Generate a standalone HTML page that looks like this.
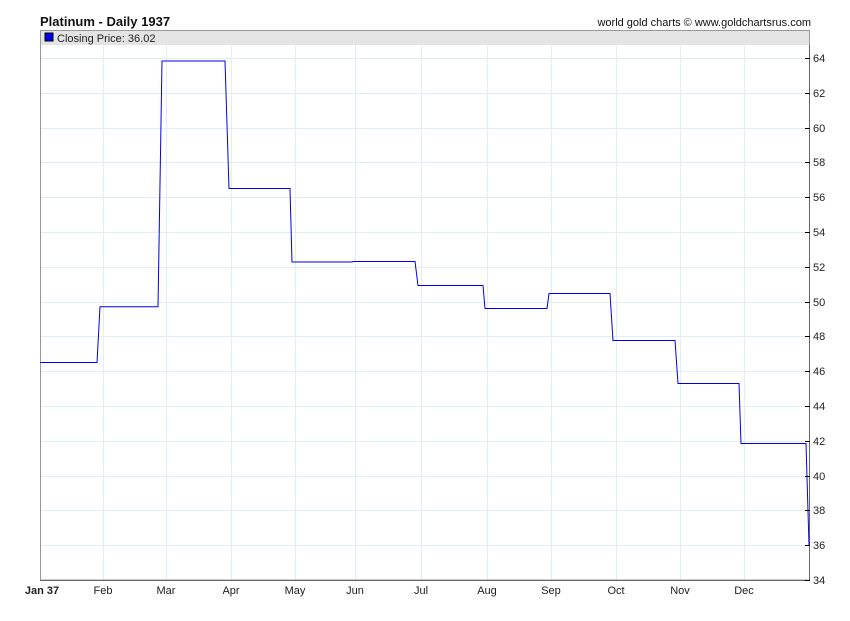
<!DOCTYPE html>
<html><head><style>
body{margin:0;background:#fff;width:850px;height:616px;overflow:hidden}
svg text{font-family:"Liberation Sans",Arial,sans-serif}
</style></head><body>
<svg width="850" height="616" xmlns="http://www.w3.org/2000/svg">
<rect width="850" height="616" fill="#fff"/>
<text x="40" y="26" font-size="13" font-weight="bold" fill="#111">Platinum - Daily 1937</text>
<text x="811" y="26" font-size="11" text-anchor="end" fill="#111">world gold charts © www.goldchartsrus.com</text>
<rect x="40" y="30" width="770" height="15" fill="#e4e4e4"/>
<rect x="45" y="33" width="8" height="8" fill="#0000ee" stroke="#000" stroke-width="1"/>
<text x="57" y="42" font-size="11" fill="#222">Closing Price: 36.02</text>
<g stroke="#e0eef8" stroke-width="1">
<line x1="103.5" y1="45" x2="103.5" y2="580"/><line x1="166.5" y1="45" x2="166.5" y2="580"/>
<line x1="231.5" y1="45" x2="231.5" y2="580"/><line x1="295.5" y1="45" x2="295.5" y2="580"/>
<line x1="355.5" y1="45" x2="355.5" y2="580"/><line x1="421.5" y1="45" x2="421.5" y2="580"/>
<line x1="487.5" y1="45" x2="487.5" y2="580"/><line x1="551.5" y1="45" x2="551.5" y2="580"/>
<line x1="616.5" y1="45" x2="616.5" y2="580"/><line x1="680.5" y1="45" x2="680.5" y2="580"/>
<line x1="744.5" y1="45" x2="744.5" y2="580"/>
<line x1="40" y1="58.5" x2="810" y2="58.5"/><line x1="40" y1="93.5" x2="810" y2="93.5"/>
<line x1="40" y1="128.5" x2="810" y2="128.5"/><line x1="40" y1="162.5" x2="810" y2="162.5"/>
<line x1="40" y1="197.5" x2="810" y2="197.5"/><line x1="40" y1="232.5" x2="810" y2="232.5"/>
<line x1="40" y1="267.5" x2="810" y2="267.5"/><line x1="40" y1="302.5" x2="810" y2="302.5"/>
<line x1="40" y1="336.5" x2="810" y2="336.5"/><line x1="40" y1="371.5" x2="810" y2="371.5"/>
<line x1="40" y1="406.5" x2="810" y2="406.5"/><line x1="40" y1="441.5" x2="810" y2="441.5"/>
<line x1="40" y1="476.5" x2="810" y2="476.5"/><line x1="40" y1="510.5" x2="810" y2="510.5"/>
<line x1="40" y1="545.5" x2="810" y2="545.5"/>
</g>
<rect x="40.5" y="30.5" width="769" height="549.5" fill="none" stroke="#999"/>
<line x1="40" y1="580.5" x2="810" y2="580.5" stroke="#666"/>
<line x1="809.5" y1="45" x2="809.5" y2="581" stroke="#666"/>
<polyline fill="none" stroke="#0000ee" stroke-width="1" points="40,362.5 97,362.5 100,306.8 158,306.8 162,61 225,61 229,188.5 290,188.5 292,262 352,262 353,261.5 415,261.5 418,285.5 483,285.5 485,308.5 547,308.5 549,293.5 610,293.5 613,340.5 675,340.5 678,383.5 739,383.5 741,443.5 806,443.5 809,545"/>
<g stroke="#000">
<line x1="805" y1="58.5" x2="810" y2="58.5"/><line x1="805" y1="93.5" x2="810" y2="93.5"/><line x1="805" y1="128.5" x2="810" y2="128.5"/><line x1="805" y1="162.5" x2="810" y2="162.5"/><line x1="805" y1="197.5" x2="810" y2="197.5"/><line x1="805" y1="232.5" x2="810" y2="232.5"/><line x1="805" y1="267.5" x2="810" y2="267.5"/><line x1="805" y1="302.5" x2="810" y2="302.5"/><line x1="805" y1="336.5" x2="810" y2="336.5"/><line x1="805" y1="371.5" x2="810" y2="371.5"/><line x1="805" y1="406.5" x2="810" y2="406.5"/><line x1="805" y1="441.5" x2="810" y2="441.5"/><line x1="805" y1="476.5" x2="810" y2="476.5"/><line x1="805" y1="510.5" x2="810" y2="510.5"/><line x1="805" y1="545.5" x2="810" y2="545.5"/><line x1="805" y1="580.5" x2="810" y2="580.5"/>
</g>
<g font-size="11" fill="#222">
<text x="813" y="62">64</text><text x="813" y="97">62</text><text x="813" y="132">60</text><text x="813" y="166">58</text><text x="813" y="201">56</text><text x="813" y="236">54</text><text x="813" y="271">52</text><text x="813" y="306">50</text><text x="813" y="340">48</text><text x="813" y="375">46</text><text x="813" y="410">44</text><text x="813" y="445">42</text><text x="813" y="480">40</text><text x="813" y="514">38</text><text x="813" y="549">36</text><text x="813" y="584">34</text>
</g>
<g font-size="11" fill="#222" text-anchor="middle">
<text x="42" y="594" font-weight="bold">Jan 37</text>
<text x="103" y="594">Feb</text><text x="166" y="594">Mar</text><text x="231" y="594">Apr</text><text x="295" y="594">May</text><text x="355" y="594">Jun</text><text x="421" y="594">Jul</text><text x="487" y="594">Aug</text><text x="551" y="594">Sep</text><text x="616" y="594">Oct</text><text x="680" y="594">Nov</text><text x="744" y="594">Dec</text>
</g>
</svg>
</body></html>
